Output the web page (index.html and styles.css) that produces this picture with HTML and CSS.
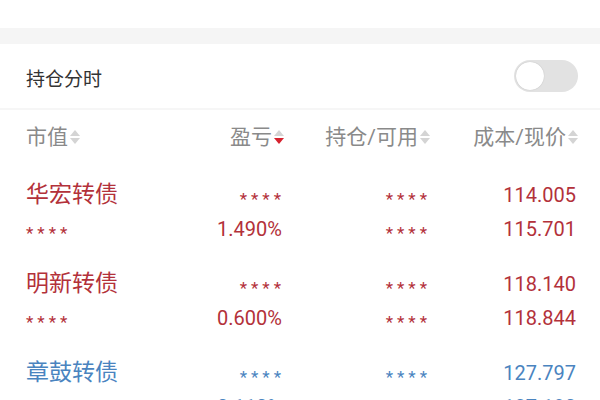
FILE: index.html
```html
<!DOCTYPE html>
<html lang="zh-CN">
<head>
    <meta charset="UTF-8">
    <meta name="viewport" content="width=device-width, initial-scale=1.0">
    <title>持仓</title>
    <link rel="stylesheet" href="styles.css">
</head>
<body>
    <div class="top-space"></div>
    <div class="band"></div>
    <div class="setting">
        <span class="setting-label">持仓分时</span>
        <div class="toggle"><div class="knob"></div></div>
    </div>
    <div class="table">
        <div class="row head">
            <div class="cell left">市值<span class="sort"><i class="up"></i><i class="down"></i></span></div>
            <div class="cell">盈亏<span class="sort"><i class="up"></i><i class="down active"></i></span></div>
            <div class="cell">持仓/可用<span class="sort"><i class="up"></i><i class="down"></i></span></div>
            <div class="cell">成本/现价<span class="sort"><i class="up"></i><i class="down"></i></span></div>
        </div>

        <div class="item red">
            <div class="row">
                <div class="cell left name">华宏转债</div>
                <div class="cell mask">****</div>
                <div class="cell mask">****</div>
                <div class="cell num">114.005</div>
            </div>
            <div class="row">
                <div class="cell left mask">****</div>
                <div class="cell num">1.490%</div>
                <div class="cell mask">****</div>
                <div class="cell num">115.701</div>
            </div>
        </div>

        <div class="item red">
            <div class="row">
                <div class="cell left name">明新转债</div>
                <div class="cell mask">****</div>
                <div class="cell mask">****</div>
                <div class="cell num">118.140</div>
            </div>
            <div class="row">
                <div class="cell left mask">****</div>
                <div class="cell num">0.600%</div>
                <div class="cell mask">****</div>
                <div class="cell num">118.844</div>
            </div>
        </div>

        <div class="item blue">
            <div class="row">
                <div class="cell left name">章鼓转债</div>
                <div class="cell mask">****</div>
                <div class="cell mask">****</div>
                <div class="cell num">127.797</div>
            </div>
            <div class="row">
                <div class="cell left mask">****</div>
                <div class="cell num">-0.110%</div>
                <div class="cell mask">****</div>
                <div class="cell num">127.190</div>
            </div>
        </div>
    </div>
</body>
</html>
```

FILE: styles.css
```css
body {
    margin: 0;
    padding: 0;
    background-color: #ffffff;
    font-family: Roboto, "Noto Sans CJK SC", sans-serif;
    color: #333333;
    overflow: hidden;
}
.top-space {
    height: 28px;
}
.band {
    height: 16px;
    background-color: #f5f5f5;
}
.setting {
    display: flex;
    justify-content: space-between;
    align-items: center;
    height: 64px;
    padding: 0 22px 0 26px;
    border-bottom: 2px solid #f6f6f6;
}
.setting-label {
    font-size: 19px;
    color: #333333;
    padding-top: 2px;
}
.toggle {
    width: 64px;
    height: 32px;
    border-radius: 16px;
    background-color: #e2e2e2;
    display: flex;
    align-items: center;
    padding-left: 2px;
    box-sizing: border-box;
}
.knob {
    width: 28px;
    height: 28px;
    border-radius: 50%;
    background-color: #ffffff;
    box-shadow: 0 0 1px rgba(0, 0, 0, 0.25);
}

.table {
    padding: 0 22px 0 26px;
}
.row {
    display: grid;
    grid-template-columns: 1fr 120px 146px 148px;
    line-height: 34px;
    height: 34px;
}
.cell {
    text-align: right;
    white-space: nowrap;
}
.cell.left {
    text-align: left;
}
.item .cell {
    padding-right: 2px;
}
.head {
    padding: 10px 0 13px;
    font-size: 21px;
    color: #8a8a8a;
}
.head .cell {
    display: flex;
    justify-content: flex-end;
    align-items: center;
}
.head .cell.left {
    justify-content: flex-start;
}
.sort {
    display: inline-flex;
    flex-direction: column;
    margin-left: 2px;
    gap: 2px;
}
.sort i {
    display: block;
    width: 0;
    height: 0;
    border-left: 5px solid transparent;
    border-right: 5px solid transparent;
}
.sort .up {
    border-bottom: 6px solid #d4d4d4;
}
.sort .down {
    border-top: 6px solid #d4d4d4;
}
.sort .down.active {
    border-top-color: #d6222e;
}

.item {
    padding: 11px 0 10px;
}
.name {
    font-size: 23px;
}
.num {
    font-size: 20px;
}
.item .mask {
    font-size: 17px;
    letter-spacing: 4px;
    padding-right: 0;
    margin-right: -1px;
    padding-top: 4px;
}
.red {
    color: #b3313a;
}
.blue {
    color: #4a84bf;
}
```
